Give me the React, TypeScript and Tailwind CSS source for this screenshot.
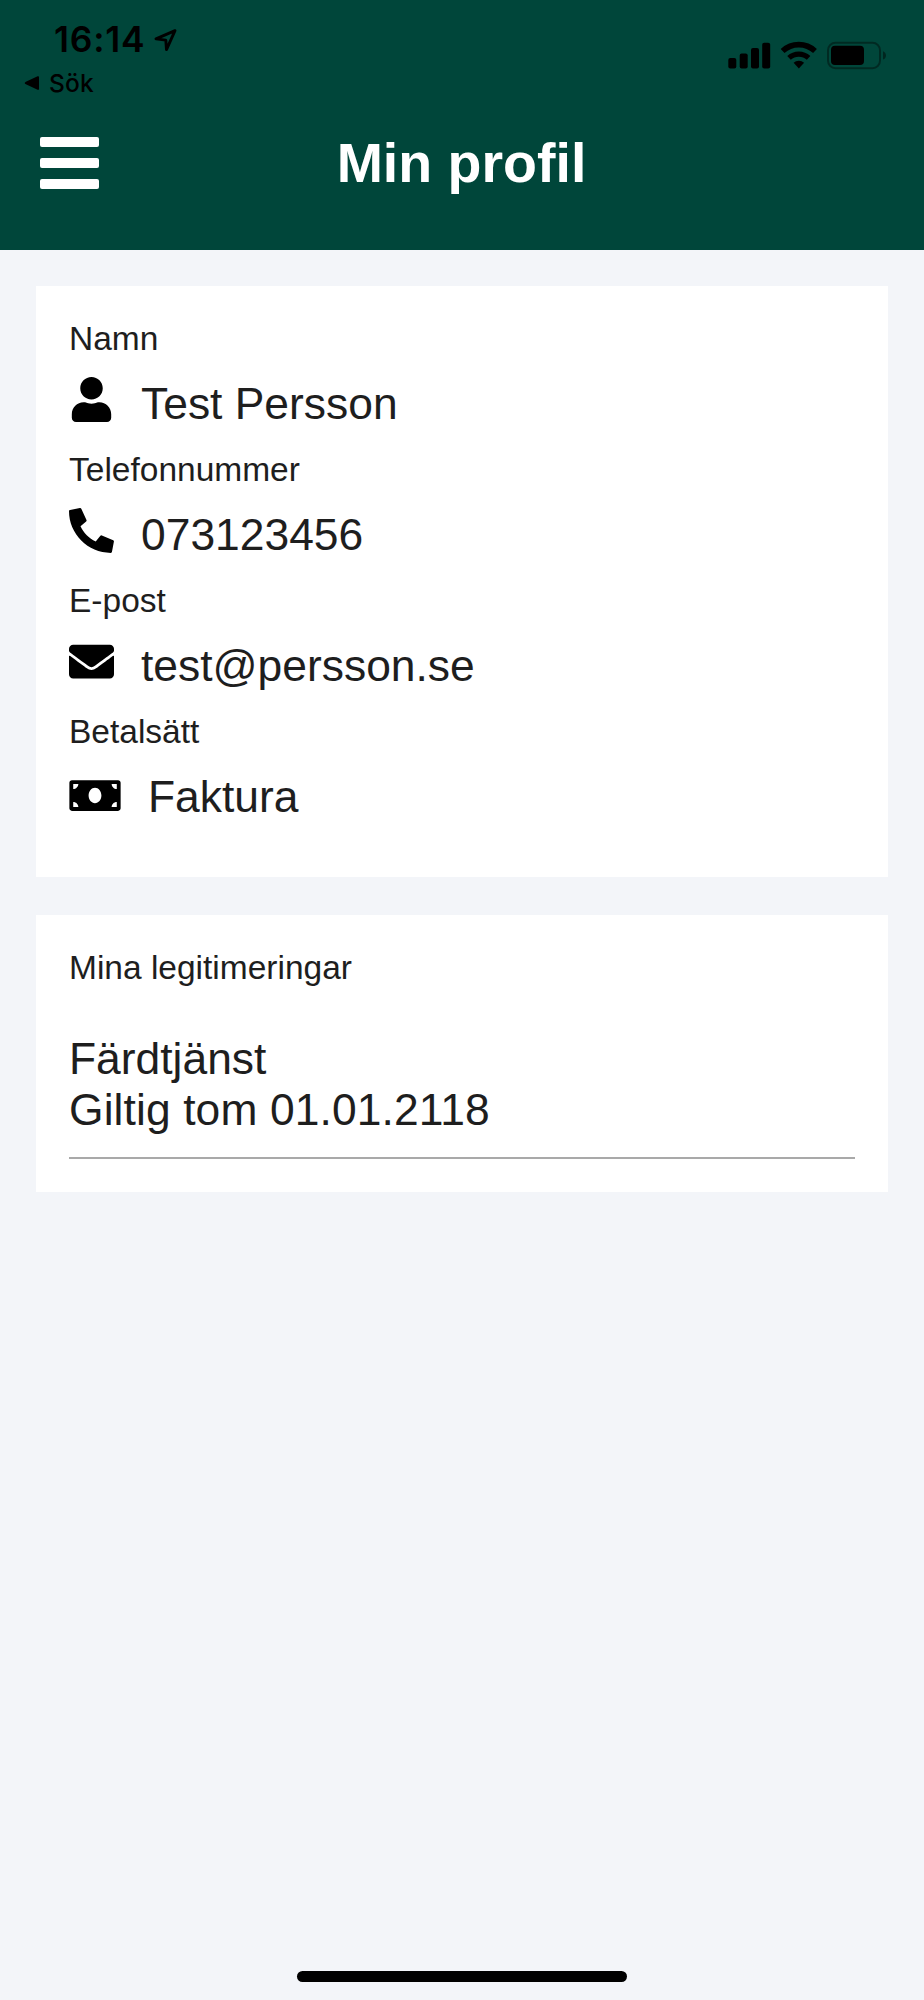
import React from 'react';
import { FaEnvelope, FaMoneyBill, FaUser } from 'react-icons/fa';

interface FieldProps {
  label: string;
  value: string;
  icon: React.ReactNode;
}

const Field: React.FC<FieldProps> = ({ label, value, icon }) => (
  <div className="mb-[21px]">
    <p className="text-[33.5px] leading-[40px]">{label}</p>
    <div className="mt-[19px] flex h-[51px] items-start gap-[27px]">
      {icon}
      <span className="text-[44.4px] leading-[51px]">{value}</span>
    </div>
  </div>
);

const PhoneIcon: React.FC = () => (
  <svg className="-mt-px h-[45px] w-[45px]" viewBox="0 0 512 512">
    <path d="M12 22 124 1q11-2 16 8l59 128q4 10-4 17l-64 54c36 76 96 137 173 173l53-64q7-9 17-5l129 54q10 4 8 16l-22 117q-2 12-13 12C214 511 0 296 0 35q0-11 12-13z" />
  </svg>
);

const StatusIcons: React.FC = () => (
  <svg className="mt-[40px] h-[30px] w-[160px]" viewBox="0 0 160 30">
    {/* signal */}
    <rect x="0.3" y="18" width="8" height="10.5" rx="2" />
    <rect x="11.7" y="13.5" width="8" height="15" rx="2" />
    <rect x="23" y="8" width="8" height="20.5" rx="2" />
    <rect x="34.2" y="2.7" width="8" height="25.8" rx="2" />
    {/* wifi */}
    <g fill="none" stroke="#000">
      <path d="M54.6 11a23.8 23.8 0 0 1 32.4 0" strokeWidth="5.6" />
      <path d="M61 17.9a14.4 14.4 0 0 1 19.6 0" strokeWidth="5.2" />
    </g>
    <path d="M65.6 22.8a7.7 7.7 0 0 1 10.5 0l-5.25 5.6z" />
    {/* battery */}
    <rect x="100" y="2.8" width="52" height="25.4" rx="7.5" fill="none" stroke="#000" strokeOpacity="0.4" strokeWidth="2" />
    <rect x="103" y="5.8" width="33" height="19.2" rx="4" />
    <path d="M155 11.2c4 1.4 4 7 0 8.4z" fillOpacity="0.45" />
  </svg>
);

const Header: React.FC = () => (
  <header className="h-[250px] bg-[#00463a]">
    <div className="flex h-[110px] justify-between pr-[36px] pl-[23px] font-['Inter',sans-serif] text-black">
      <div>
        <div className="mt-[18px] flex h-[44px] items-center gap-[8px] pl-[31px]">
          <span className="text-[35.4px] leading-[44px] font-semibold tracking-[0.8px]">16:14</span>
          <svg className="h-[24px] w-[24px]" viewBox="0 0 24 24" fill="none" stroke="#000" strokeWidth="2.9" strokeLinejoin="round">
            <path d="M22 2.6 3 10.9l9.8 1.2.7 9.5z" />
          </svg>
        </div>
        <div className="mt-[6px] flex h-[30px] items-center gap-[9px]">
          <svg className="h-[16px] w-[17px]" viewBox="0 0 17 16">
            <path d="M2.9 6.7 14.6 1.3q1.4-.5 1.4.8v11.8q0 1.3-1.4.8L2.9 9.3q-2.4-1.3 0-2.6z" />
          </svg>
          <span className="text-[24.5px] leading-[30px] font-medium tracking-[0.2px]">Sök</span>
        </div>
      </div>
      <StatusIcons />
    </div>

    <div className="grid h-[106px] grid-cols-[1fr_auto_1fr] items-center px-[40px]">
      <button aria-label="Meny" className="flex w-[59px] flex-col gap-[11px]">
        <span className="h-[10px] w-full rounded-[2px] bg-white" />
        <span className="h-[10px] w-full rounded-[2px] bg-white" />
        <span className="h-[10px] w-full rounded-[2px] bg-white" />
      </button>
      <h1 className="-ml-px text-[55.5px] leading-[64px] font-bold text-white">Min profil</h1>
    </div>
  </header>
);

const App: React.FC = () => {
  return (
    <div className="flex h-[2000px] w-[924px] flex-col bg-[#f3f5f9] font-['Liberation_Sans',Arial,sans-serif] text-[#1e1e1e]">
      <Header />

      <main className="flex-1 px-[36px] pt-[36px]">
        {/* contact details */}
        <section className="h-[591px] bg-white px-[33px] pt-[33px]">
          <Field label="Namn" value="Test Persson" icon={<FaUser className="-mt-px h-[45px] w-[45px] text-black" />} />
          <Field label="Telefonnummer" value="073123456" icon={<PhoneIcon />} />
          <Field label="E-post" value="test@persson.se" icon={<FaEnvelope className="-mt-px h-[45px] w-[45px] text-black" />} />
          <Field label="Betalsätt" value="Faktura" icon={<FaMoneyBill className="mt-[4px] h-[41px] w-[52px] text-black" />} />
        </section>

        {/* permits */}
        <section className="mt-[38px] h-[277px] bg-white px-[33px] pt-[33px]">
          <p className="text-[33.5px] leading-[40px]">Mina legitimeringar</p>
          <div className="mt-[45px] border-b-2 border-[#a9a9a9] pb-[22px] text-[44.4px] leading-[51px]">
            <p>Färdtjänst</p>
            <p className="tracking-[0.1px]">Giltig tom 01.01.2118</p>
          </div>
        </section>
      </main>

      <div className="mx-auto mb-[18px] h-[11px] w-[330px] rounded-full bg-black" />
    </div>
  );
};

export default App;
